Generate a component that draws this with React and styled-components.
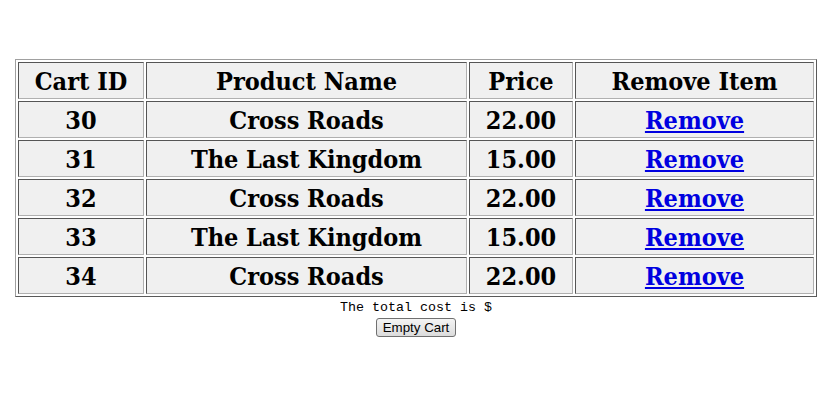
import React from 'react';
import styled, { createGlobalStyle } from 'styled-components';

const GlobalStyle = createGlobalStyle`
    body {
        margin: 8px;
        background: #ffffff;
        font-family: "Liberation Serif", serif;
    }
`;

const Page = styled.div`
    padding-top: 51px;
    display: flex;
    flex-direction: column;
    align-items: center;
`;

const CartTable = styled.table`
    width: 802px;
    table-layout: fixed;
    border-collapse: separate;
    border-spacing: 2px;
    border: 1px solid;
    border-color: #a0a0a0 #5a5a5a #5a5a5a #a0a0a0;
`;

const Cell = styled.td`
    box-sizing: border-box;
    height: 37px;
    padding: 2px 1px 0;
    background: #f0f0f0;
    border: 1px solid;
    border-color: #555555 #b0b0b0 #b0b0b0 #555555;
    text-align: center;
    vertical-align: middle;
    font-family: "DejaVu Serif Condensed", "DejaVu Serif", serif;
    font-stretch: condensed;
    font-weight: bold;
    font-size: 25px;
    line-height: 28px;
    color: #000;
    white-space: nowrap;
`;

const HeadCell = styled(Cell).attrs({ as: 'th' })``;

const RemoveLink = styled.a`
    color: #0000e0;
    text-decoration: underline;
`;

const Total = styled.div`
    margin-top: 3px;
    font-family: "Liberation Mono", monospace;
    font-size: 13.33px;
    line-height: 15px;
    color: #000;
`;

const EmptyButton = styled.button`
    margin-top: 3px;
    height: 19px;
    padding: 0 6px;
    font-family: "Liberation Sans", Arial, sans-serif;
    font-size: 13.33px;
    color: #000;
    background: linear-gradient(#f4f4f4, #dcdcdc);
    border: 1px solid #707070;
    border-radius: 3px;
`;

const columns = [
    { label: 'Cart ID', width: 126 },
    { label: 'Product Name', width: 321 },
    { label: 'Price', width: 104 },
    { label: 'Remove Item', width: 239 },
];

const items = [
    { id: 30, name: 'Cross Roads', price: '22.00' },
    { id: 31, name: 'The Last Kingdom', price: '15.00' },
    { id: 32, name: 'Cross Roads', price: '22.00' },
    { id: 33, name: 'The Last Kingdom', price: '15.00' },
    { id: 34, name: 'Cross Roads', price: '22.00' },
];

const App = () => {
    return (
        <>
            <GlobalStyle />
            <Page>
                <CartTable>
                    <colgroup>
                        {columns.map(c => <col key={c.label} style={{ width: c.width }} />)}
                    </colgroup>
                    <thead>
                        <tr>
                            {columns.map(c => <HeadCell key={c.label}>{c.label}</HeadCell>)}
                        </tr>
                    </thead>
                    <tbody>
                        {items.map(item => (
                            <tr key={item.id}>
                                <Cell>{item.id}</Cell>
                                <Cell>{item.name}</Cell>
                                <Cell>{item.price}</Cell>
                                <Cell><RemoveLink href="#">Remove</RemoveLink></Cell>
                            </tr>
                        ))}
                    </tbody>
                </CartTable>
                <Total>The total cost is $</Total>
                <EmptyButton>Empty Cart</EmptyButton>
            </Page>
        </>
    );
};

export default App;
